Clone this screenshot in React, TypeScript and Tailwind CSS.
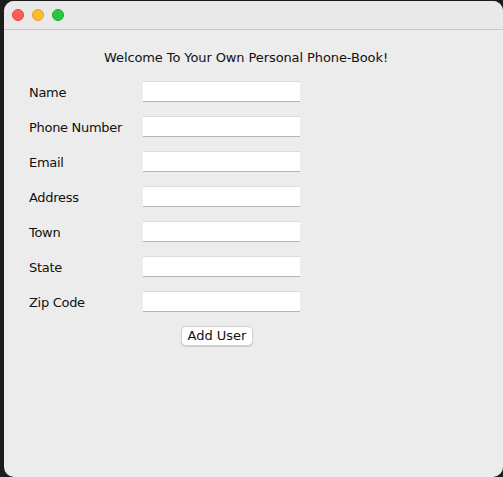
const fields = ["Name", "Phone Number", "Email", "Address", "Town", "State", "Zip Code"];

export default function App() {
  return (
    <div className="h-[477px] w-[503px] bg-[#1c1c1c] pl-[4px] pt-[1px] font-['DejaVu_Sans',sans-serif] text-[13px] text-[#111]">
      <div className="flex h-[476px] w-[499px] flex-col overflow-hidden rounded-[10px] bg-[#ececec]">
        {/* title bar */}
        <div className="flex h-[29px] shrink-0 items-center gap-[8px] border-b border-[#c9c9c9] bg-[#e9e9e9] pl-[8px]">
          <span className="h-[12px] w-[12px] rounded-full border border-[#e0443e] bg-[#ff5f57]" />
          <span className="h-[12px] w-[12px] rounded-full border border-[#dea123] bg-[#febc2e]" />
          <span className="h-[12px] w-[12px] rounded-full border border-[#1aab29] bg-[#28c840]" />
        </div>

        <div className="flex flex-col pt-[20px]">
          <h1 className="ml-[100px] h-[16px] text-[13px] leading-[16px] tracking-[-0.1px]">
            Welcome To Your Own Personal Phone-Book!
          </h1>

          <div className="mt-[15px] flex flex-col gap-[14px] pl-[25px]">
            {fields.map((f) => (
              <div key={f} className="flex h-[21px] items-center">
                <label className="mt-[2px] w-[114px] leading-[16px] tracking-[-0.3px]">{f}</label>
                <input className="h-[21px] w-[157px] border-t border-b border-t-[#dcdcdc] border-b-[#b5b5b5] bg-white outline-none" />
              </div>
            ))}
          </div>

          <div className="mt-[14px] pl-[177px]">
            <button className="h-[20px] w-[72px] rounded-[5px] border border-[#d0d0d0] bg-white text-[13px] leading-[16px] shadow-[0_1px_1px_rgba(0,0,0,0.15)]">
              Add User
            </button>
          </div>
        </div>
      </div>
    </div>
  );
}
